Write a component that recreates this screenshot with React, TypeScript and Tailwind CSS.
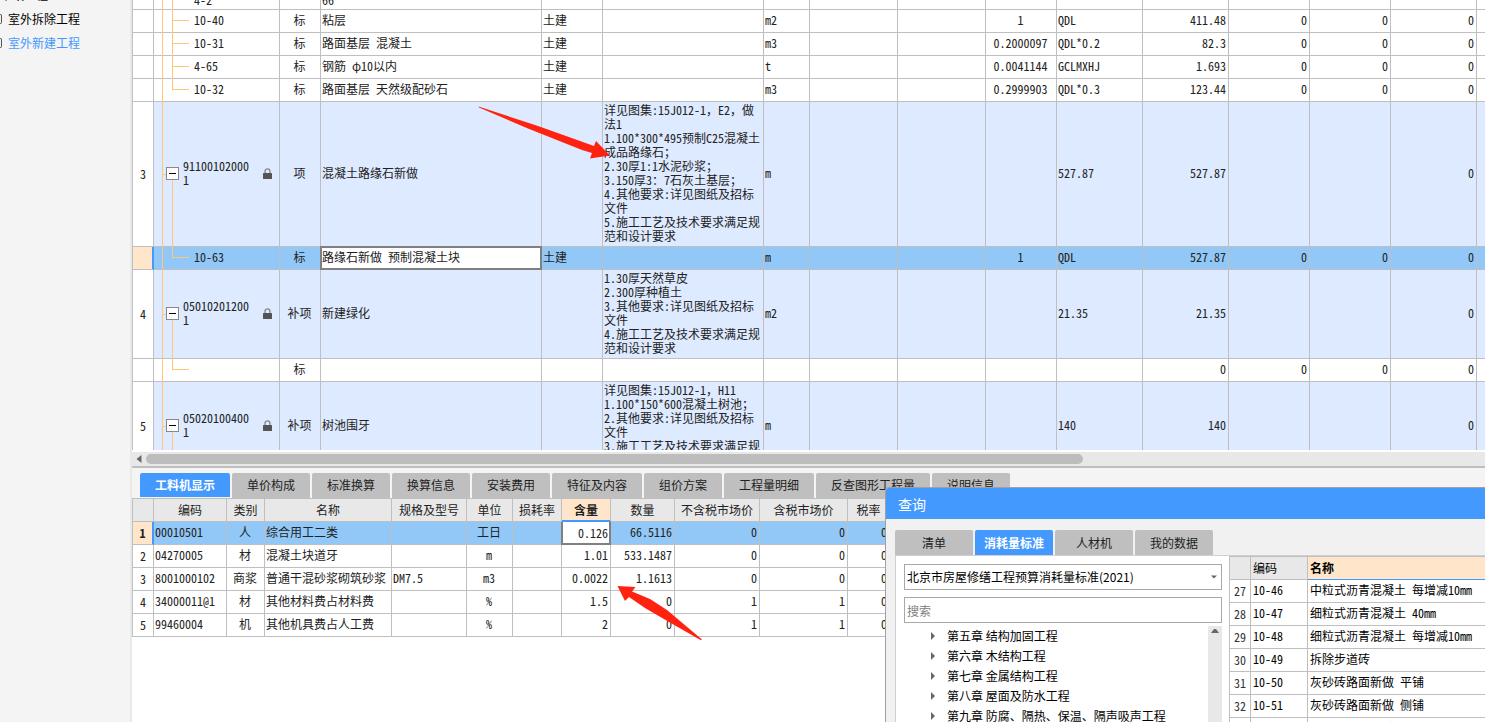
import { clsx } from 'clsx';

type BillRow = {
  kind: 'parent' | 'child' | 'active' | 'clipped';
  no?: string;
  code: string;
  type: string;
  name: string;
  major?: string;
  feature?: string[];
  unit?: string;
  ratio?: string;
  expr?: string;
  qty?: string;
  zeros?: string[];
  last?: boolean;
};

const BILL_COLUMNS = [
  'w-[22px]',
  'w-[126px]',
  'w-[41px]',
  'w-[221px]',
  'w-[61px]',
  'w-[161px]',
  'w-[46px]',
  'w-[88px]',
  'w-[88px]',
  'w-[71px]',
  'w-[86px]',
  'w-[86px]',
  'w-[81px]',
  'w-[81px]',
  'w-[86px]',
  'w-auto',
];

const BILL_ROWS: BillRow[] = [
  { kind: 'clipped', code: '4-2', type: '', name: '66' },
  { kind: 'child', code: '10-40', type: '标', name: '粘层', major: '土建', unit: 'm2', ratio: '1', expr: 'QDL', qty: '411.48', zeros: ['0', '0', '0'] },
  { kind: 'child', code: '10-31', type: '标', name: '路面基层 混凝土', major: '土建', unit: 'm3', ratio: '0.2000097', expr: 'QDL*0.2', qty: '82.3', zeros: ['0', '0', '0'] },
  { kind: 'child', code: '4-65', type: '标', name: '钢筋 φ10以内', major: '土建', unit: 't', ratio: '0.0041144', expr: 'GCLMXHJ', qty: '1.693', zeros: ['0', '0', '0'] },
  { kind: 'child', code: '10-32', type: '标', name: '路面基层 天然级配砂石', major: '土建', unit: 'm3', ratio: '0.2999903', expr: 'QDL*0.3', qty: '123.44', zeros: ['0', '0', '0'], last: true },
  {
    kind: 'parent',
    no: '3',
    code: '911001020001',
    type: '项',
    name: '混凝土路缘石新做',
    feature: [
      '详见图集:15J012-1，E2，做',
      '法1',
      '1.100*300*495预制C25混凝土',
      '成品路缘石；',
      '2.30厚1:1水泥砂浆；',
      '3.150厚3：7石灰土基层；',
      '4.其他要求:详见图纸及招标',
      '文件',
      '5.施工工艺及技术要求满足规',
      '范和设计要求',
    ],
    unit: 'm',
    expr: '527.87',
    qty: '527.87',
    zeros: ['', '', '0'],
  },
  { kind: 'active', code: '10-63', type: '标', name: '路缘石新做 预制混凝土块', major: '土建', unit: 'm', ratio: '1', expr: 'QDL', qty: '527.87', zeros: ['0', '0', '0'], last: true },
  {
    kind: 'parent',
    no: '4',
    code: '050102012001',
    type: '补项',
    name: '新建绿化',
    feature: [
      '1.30厚天然草皮',
      '2.300厚种植土',
      '3.其他要求:详见图纸及招标',
      '文件',
      '4.施工工艺及技术要求满足规',
      '范和设计要求',
    ],
    unit: 'm2',
    expr: '21.35',
    qty: '21.35',
    zeros: ['', '', '0'],
  },
  { kind: 'child', code: '', type: '标', name: '', qty: '0', zeros: ['0', '0', '0'], last: true },
  {
    kind: 'parent',
    no: '5',
    code: '050201004001',
    type: '补项',
    name: '树池围牙',
    feature: [
      '详见图集:15J012-1，H11',
      '1.100*150*600混凝土树池；',
      '2.其他要求:详见图纸及招标',
      '文件',
      '3.施工工艺及技术要求满足规',
      '范和设计要求',
    ],
    unit: 'm',
    expr: '140',
    qty: '140',
    zeros: ['', '', '0'],
  },
];

const DETAIL_TABS = [
  { label: '工料机显示', width: 'w-[90px]' },
  { label: '单价构成', width: 'w-[78px]' },
  { label: '标准换算', width: 'w-[78px]' },
  { label: '换算信息', width: 'w-[78px]' },
  { label: '安装费用', width: 'w-[78px]' },
  { label: '特征及内容', width: 'w-[90px]' },
  { label: '组价方案', width: 'w-[78px]' },
  { label: '工程量明细', width: 'w-[90px]' },
  { label: '反查图形工程量', width: 'w-[114px]' },
  { label: '说明信息', width: 'w-[78px]' },
];

const RESOURCE_COLUMNS = [
  { label: '', width: 'w-[22px]' },
  { label: '编码', width: 'w-[73px]' },
  { label: '类别', width: 'w-[38px]' },
  { label: '名称', width: 'w-[127px]' },
  { label: '规格及型号', width: 'w-[75px]' },
  { label: '单位', width: 'w-[46px]' },
  { label: '损耗率', width: 'w-[49px]' },
  { label: '含量', width: 'w-[49px]' },
  { label: '数量', width: 'w-[64px]' },
  { label: '不含税市场价', width: 'w-[85px]' },
  { label: '含税市场价', width: 'w-[88px]' },
  { label: '税率', width: 'w-[42px]' },
];

const RESOURCES = [
  ['00010501', '人', '综合用工二类', '', '工日', '', '0.126', '66.5116', '0', '0', '0'],
  ['04270005', '材', '混凝土块道牙', '', 'm', '', '1.01', '533.1487', '0', '0', '0'],
  ['8001000102', '商浆', '普通干混砂浆砌筑砂浆', 'DM7.5', 'm3', '', '0.0022', '1.1613', '0', '0', '0'],
  ['34000011@1', '材', '其他材料费占材料费', '', '%', '', '1.5', '0', '1', '1', '0'],
  ['99460004', '机', '其他机具费占人工费', '', '%', '', '2', '0', '1', '1', '0'],
];

const RESOURCE_ALIGN = [
  'text-left',
  'text-center',
  'text-left',
  'text-left',
  'text-center',
  'text-right',
  'text-right',
  'text-right',
  'text-right',
  'text-right',
  'text-right',
];

const QUERY_TABS = ['清单', '消耗量标准', '人材机', '我的数据'];

const CHAPTERS = [
  '第五章 结构加固工程',
  '第六章 木结构工程',
  '第七章 金属结构工程',
  '第八章 屋面及防水工程',
  '第九章 防腐、隔热、保温、隔声吸声工程',
];

const QUOTAS = [
  ['27', '10-46', '中粒式沥青混凝土 每增减10mm'],
  ['28', '10-47', '细粒式沥青混凝土 40mm'],
  ['29', '10-48', '细粒式沥青混凝土 每增减10mm'],
  ['30', '10-49', '拆除步道砖'],
  ['31', '10-50', '灰砂砖路面新做 平铺'],
  ['32', '10-51', '灰砂砖路面新做 侧铺'],
  ['33', '10-52', '灰砂砖路面拆除'],
];

const CELL = 'border-r border-b border-[#bfbfbf] pt-0 pr-0.5 pb-0.5 pl-px whitespace-nowrap';

export default function App() {
  return (
    <div className="relative flex h-screen overflow-hidden bg-white font-['Noto_Sans_CJK_SC',sans-serif] text-xs text-[#222222]">
      <Sidebar />
      <main className="flex min-w-0 flex-1 flex-col">
        <BillPane />
        <DetailPane />
      </main>
      <QueryWindow />
    </div>
  );
}

function Sidebar() {
  return (
    <nav className="w-[132px] shrink-0 overflow-hidden border-r-2 border-[#e8e8e8] bg-[#f4f4f4]">
      <ul className="-mt-[17px]">
        <li className="flex h-6 items-center">
          <a href="#outdoor" className="text-black">
            市政工程
          </a>
        </li>
        <SidebarItem label="室外拆除工程" />
        <SidebarItem label="室外新建工程" active />
      </ul>
    </nav>
  );
}

function SidebarItem({ label, active }: { label: string; active?: boolean }) {
  return (
    <li className="flex h-6 items-center gap-1.5">
      <span className="h-2.5 w-0.5 rounded-r-sm border-y border-r border-[#555555]" />
      <a href="#project" className={active ? 'text-[#4499ff]' : 'text-black'}>
        {label}
      </a>
    </li>
  );
}

function BillPane() {
  return (
    <section className="relative flex min-h-0 flex-1 flex-col">
      <div className="min-h-0 flex-1 overflow-hidden font-['Noto_Sans_Mono_CJK_SC','Noto_Sans_CJK_SC',monospace] leading-[14px]">
        <table className="-mt-[13px] w-full table-fixed border-separate border-spacing-0">
          <colgroup>
            {BILL_COLUMNS.map((width, i) => (
              <col key={i} className={width} />
            ))}
          </colgroup>
          <tbody>
            {BILL_ROWS.map((row, i) => (
              <BillTableRow key={i} row={row} />
            ))}
          </tbody>
        </table>
      </div>
      {/* Horizontal scrollbar */}
      <div className="mt-0.5 flex h-3.5 shrink-0 items-center gap-1 bg-[#e8e8e8] pl-1">
        <svg viewBox="0 0 6 8" className="h-2 w-1.5 fill-[#666670]">
          <path d="M5.5 0V8L0.5 4Z" />
        </svg>
        <div className="flex-1">
          <div className="h-2.5 w-[70%] rounded-full bg-[#bdbdbd]" />
        </div>
      </div>
      <div className="h-0.5 shrink-0 bg-[#bfbfbf]" />
      <svg
        viewBox="0 0 132 54"
        className="pointer-events-none absolute top-[106px] left-[346px] h-[54px] w-[132px] fill-[#ff2211]"
      >
        <path d="M0.5 0.5L60 20L116 40L118 35L132 49.5L112 52.5L114 47L104 44L50 22.5L1 1.5Z" />
      </svg>
    </section>
  );
}

function BillTableRow({ row }: { row: BillRow }) {
  const zeros = row.zeros ?? ['', '', ''];
  const parent = row.kind === 'parent';
  const active = row.kind === 'active';

  return (
    <tr
      className={clsx('h-[23px]', {
        'bg-[#ddeaff]': parent,
        'bg-[#92c8f7]': active,
        'align-bottom': row.kind === 'clipped',
      })}
    >
      <td
        className={clsx(
          'border-b border-l border-[#bfbfbf] p-0 text-center',
          active ? 'border-r-2 border-r-[#4499ff] bg-[#ffe6ca]' : 'border-r bg-white',
        )}
      >
        {row.no}
      </td>
      <td className="relative border-r border-b border-[#bfbfbf] px-0 pt-0 pb-0.5">
        <TreeLines row={row} />
        {parent ? (
          <div className="relative flex items-center pl-3">
            <button type="button" aria-label="折叠" className="flex size-[13px] shrink-0 items-center justify-center border border-[#888888] bg-white">
              <span className="h-px w-[7px] bg-black" />
            </button>
            <span className="ml-1 w-[70px] break-all">{row.code}</span>
            <LockIcon />
          </div>
        ) : (
          <div className="relative pl-10">{row.code}</div>
        )}
      </td>
      <td className={clsx(CELL, 'text-center')}>{row.type}</td>
      <td className={clsx(CELL, 'relative')}>
        {active ? (
          <input
            aria-label="名称"
            defaultValue={row.name}
            className="absolute -top-px -right-px -bottom-px -left-px border-2 border-[#808080] bg-white pb-0.5 outline-none"
          />
        ) : (
          row.name
        )}
      </td>
      <td className={CELL}>{row.major}</td>
      <td className={CELL}>
        {row.feature && (
          <div className="pt-px pb-px">
            {row.feature.map((line) => (
              <div key={line}>{line}</div>
            ))}
          </div>
        )}
      </td>
      <td className={CELL}>{row.unit}</td>
      <td className={CELL} />
      <td className={CELL} />
      <td className={clsx(CELL, 'text-center')}>{row.ratio}</td>
      <td className={CELL}>{row.expr}</td>
      <td className={clsx(CELL, 'text-right')}>{row.qty}</td>
      {zeros.map((zero, i) => (
        <td key={i} className={clsx(CELL, 'text-right')}>
          {zero}
        </td>
      ))}
      <td className="border-b border-[#bfbfbf] p-0" />
    </tr>
  );
}

// Guide lines of the code tree: trunk, branch and the stub to the item
function TreeLines({ row }: { row: BillRow }) {
  if (row.kind === 'parent') {
    return (
      <>
        <span className="absolute top-0 -bottom-px left-2 w-px bg-[#ffc878]" />
        <span className="absolute top-1/2 left-2 h-px w-1 bg-[#ffc878]" />
        <span className="absolute top-1/2 -bottom-px left-[18px] w-px bg-[#ffc878]" />
      </>
    );
  }
  return (
    <>
      <span className="absolute top-0 -bottom-px left-2 w-px bg-[#ffc878]" />
      <span
        className={clsx(
          'absolute top-0 left-[18px] w-px bg-[#ffc878]',
          row.last ? 'bottom-1/2' : '-bottom-px',
        )}
      />
      {row.kind !== 'clipped' && (
        <span className="absolute bottom-1/2 left-[18px] h-px w-[17px] bg-[#ffc878]" />
      )}
    </>
  );
}

function DetailPane() {
  return (
    <section className="relative flex h-[254px] shrink-0 flex-col bg-white">
      <div role="tablist" className="flex h-[30px] gap-0.5 bg-[#f4f4f4] pt-[5px] pl-2">
        {DETAIL_TABS.map((tab, i) => (
          <button
            key={tab.label}
            type="button"
            role="tab"
            aria-selected={i === 0}
            className={clsx(
              'rounded-t-xs whitespace-nowrap',
              tab.width,
              i === 0 ? 'mb-px bg-[#4499ff] font-bold text-white' : 'bg-[#bfbfbf] pb-0.5',
            )}
          >
            {tab.label}
          </button>
        ))}
      </div>
      <div className="border-t border-[#bfbfbf] font-['Noto_Sans_Mono_CJK_SC','Noto_Sans_CJK_SC',monospace] leading-[14px]">
        <table className="w-[758px] table-fixed border-separate border-spacing-0">
          <thead>
            <tr className="h-[23px] bg-[#e8e8e8]">
              {RESOURCE_COLUMNS.map((column, i) => (
                <th
                  key={i}
                  scope="col"
                  className={clsx(
                    'border-r border-r-[#bfbfbf] p-0 whitespace-nowrap',
                    column.width,
                    i === 0 && 'border-l border-l-[#bfbfbf]',
                    column.label === '含量'
                      ? 'border-b-2 border-b-[#4499ff] bg-[#ffe6ca] font-bold'
                      : 'border-b border-b-[#bfbfbf] font-normal',
                  )}
                >
                  {column.label}
                </th>
              ))}
            </tr>
          </thead>
          <tbody>
            {RESOURCES.map((cells, r) => (
              <tr key={cells[0]} className={clsx('h-[23px]', r === 0 && 'bg-[#92c8f7]')}>
                <th
                  scope="row"
                  className={clsx(
                    'border-b border-l border-[#bfbfbf] p-0',
                    r === 0
                      ? 'border-r-2 border-r-[#4499ff] bg-[#ffe6ca] font-bold'
                      : 'border-r bg-white font-normal',
                  )}
                >
                  {r + 1}
                </th>
                {cells.map((cell, c) => (
                  <td key={c} className={clsx(CELL, 'relative', RESOURCE_ALIGN[c])}>
                    {r === 0 && c === 6 ? (
                      <input
                        aria-label="含量"
                        defaultValue={cell}
                        className="absolute top-0 -bottom-px -left-px w-[50px] border-2 border-t-0 border-[#808080] bg-white pr-px text-right outline-none"
                      />
                    ) : (
                      cell
                    )}
                  </td>
                ))}
              </tr>
            ))}
          </tbody>
        </table>
      </div>
      <svg
        viewBox="0 0 86 56"
        className="pointer-events-none absolute top-[117px] left-[485px] h-[56px] w-[86px] fill-[#ff2211]"
      >
        <path d="M0.5 1L18.5 2L15 6.5L33 14L50 25L85 54.5L83.5 55L52 37L28 23L12 12L8 16Z" />
      </svg>
    </section>
  );
}

function QueryWindow() {
  return (
    <section
      aria-label="查询"
      className="absolute right-0 bottom-0 flex h-[235px] w-[600px] flex-col overflow-hidden rounded-tl-sm border-t border-l border-[#a0a0a0] bg-[#f1f1f1]"
    >
      <h2 className="flex h-[31px] shrink-0 items-center bg-[#4499ff] pl-3 text-sm text-white">
        查询
      </h2>
      <div role="tablist" className="mt-[11px] ml-[9px] flex h-[25px] shrink-0 gap-0.5">
        {QUERY_TABS.map((tab) => (
          <button
            key={tab}
            type="button"
            role="tab"
            aria-selected={tab === '消耗量标准'}
            className={clsx(
              'w-[78px] rounded-t-xs',
              tab === '消耗量标准' ? 'bg-[#4499ff] font-bold text-white' : 'bg-[#bfbfbf]',
            )}
          >
            {tab}
          </button>
        ))}
      </div>
      <div className="ml-[9px] flex min-h-0 flex-1 border-t border-l border-[#d0d0d0]">
        <div className="flex w-[333px] shrink-0 flex-col gap-[7px] bg-white pt-2 pr-[7px] pl-2 text-black">
          <div className="relative h-[26px] shrink-0">
            <select
              aria-label="标准"
              className="h-full w-full appearance-none border border-[#a8a8a8] bg-white px-0.5 outline-none"
            >
              <option>北京市房屋修缮工程预算消耗量标准(2021)</option>
            </select>
            <svg viewBox="0 0 6 4" className="pointer-events-none absolute top-[11px] right-[5px] h-1 w-1.5 fill-[#666666]">
              <path d="M0 0.5H6L3 3.5Z" />
            </svg>
          </div>
          <input
            type="search"
            aria-label="搜索"
            placeholder="搜索"
            className="h-[26px] w-full shrink-0 border border-[#a8a8a8] bg-white px-0.5 outline-none placeholder:text-[#808080]"
          />
          <div className="-mt-1 flex min-h-0 flex-1">
            <ul className="min-w-0 flex-1">
              {CHAPTERS.map((chapter) => (
                <li key={chapter} className="flex h-5 items-center pl-[27px] whitespace-nowrap">
                  <svg viewBox="0 0 4 8" className="mr-3 h-2 w-1 shrink-0 fill-[#666666]">
                    <path d="M0 0L4 4L0 8Z" />
                  </svg>
                  {chapter}
                </li>
              ))}
            </ul>
            <div className="w-3.5 shrink-0 bg-[#e8e8e8]">
              <svg viewBox="0 0 14 8" className="h-2 w-3.5 fill-[#666670]">
                <path d="M3 7H11L8 3H6Z" />
              </svg>
            </div>
          </div>
        </div>
        <QuotaTable />
      </div>
    </section>
  );
}

function QuotaTable() {
  return (
    <div className="min-w-0 flex-1 overflow-hidden border-l border-[#bfbfbf] bg-white font-['Noto_Sans_Mono_CJK_SC','Noto_Sans_CJK_SC',monospace] leading-[14px] text-black">
      <table className="w-full table-fixed border-separate border-spacing-0 border-t border-[#bfbfbf]">
        <thead>
          <tr className="h-[23px] bg-[#e8e8e8] text-left">
            <th className="w-[21px] border-r border-b border-[#bfbfbf] p-0" />
            <th scope="col" className="w-[57px] border-r border-b border-[#bfbfbf] px-0.5 py-0 font-normal">
              编码
            </th>
            <th scope="col" className="border-b border-[#4499ff] bg-[#ffe6ca] px-0.5 py-0 font-bold">
              名称
            </th>
          </tr>
        </thead>
        <tbody>
          {QUOTAS.map(([no, code, name]) => (
            <tr key={no} className="h-[23px]">
              <td className="border-r border-b border-[#bfbfbf] p-0 text-center text-[#333333]">{no}</td>
              <td className="border-r border-b border-[#bfbfbf] px-0.5 pt-0 pb-0.5 whitespace-nowrap">{code}</td>
              <td className="border-b border-[#bfbfbf] px-0.5 pt-0 pb-0.5 whitespace-nowrap">{name}</td>
            </tr>
          ))}
        </tbody>
      </table>
    </div>
  );
}

function LockIcon() {
  return (
    <svg viewBox="0 0 9 11" className="ml-2.5 h-[11px] w-[9px] shrink-0">
      <path d="M2 6V3.5C2 0 7 0 7 3.5V6" fill="none" stroke="#888888" strokeWidth="1.3" />
      <rect y="5" width="9" height="6" rx="0.5" fill="#555555" />
    </svg>
  );
}
